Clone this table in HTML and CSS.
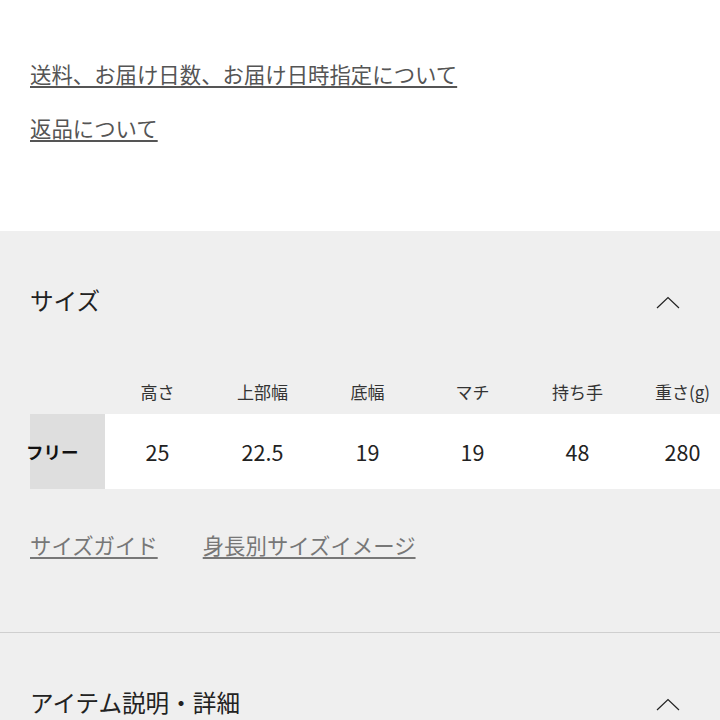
FILE: index.html
```html
<!DOCTYPE html>
<html lang="ja">
<head>
<meta charset="utf-8">
<link rel="stylesheet" href="styles.css">
</head>
<body>
<section class="top">
  <a class="link" href="#">送料、お届け日数、お届け日時指定について</a>
  <a class="link" href="#">返品について</a>
</section>
<section class="panel">
  <div class="acc-head">
    <h2 class="acc-title">サイズ</h2>
    <svg class="chev" width="24" height="13" viewBox="0 0 24 13"><path d="M1 12 L12 1.5 L23 12" fill="none" stroke="#222" stroke-width="1.2"/></svg>
  </div>
  <div class="table-wrap">
    <div class="size-table">
      <div class="th th-empty"></div>
      <div class="th">高さ</div>
      <div class="th">上部幅</div>
      <div class="th">底幅</div>
      <div class="th">マチ</div>
      <div class="th">持ち手</div>
      <div class="th">重さ(g)</div>
      <div class="td td-label"><span>フリー</span></div>
      <div class="td">25</div>
      <div class="td">22.5</div>
      <div class="td">19</div>
      <div class="td">19</div>
      <div class="td">48</div>
      <div class="td">280</div>
    </div>
  </div>
  <div class="guides">
    <a class="guide" href="#">サイズガイド</a>
    <a class="guide" href="#">身長別サイズイメージ</a>
  </div>
</section>
<section class="panel panel-second">
  <div class="acc-head acc-head-2">
    <h2 class="acc-title">アイテム説明・詳細</h2>
    <svg class="chev" width="24" height="13" viewBox="0 0 24 13"><path d="M1 12 L12 1.5 L23 12" fill="none" stroke="#222" stroke-width="1.2"/></svg>
  </div>
</section>
</body>
</html>
```

FILE: styles.css
```css
html, body {
  margin: 0;
  padding: 0;
  width: 720px;
  height: 720px;
  overflow: hidden;
  font-family: "Noto Sans CJK JP", "Noto Sans", sans-serif;
  color: #222;
}

.top {
  background: #fff;
  padding: 47px 30px 76px;
  height: 108px;
}

.link {
  display: block;
  width: max-content;
  font-size: 21.4px;
  line-height: 54px;
  color: #555;
  text-decoration: underline;
  text-decoration-color: #555;
  text-underline-offset: 3px;
  text-decoration-thickness: 2px;
}

.panel {
  background: #efefef;
}

.acc-head {
  display: flex;
  align-items: center;
  justify-content: space-between;
  height: 138px;
  padding: 0 40px 0 30px;
}

.acc-title {
  margin: 0;
  font-size: 23.6px;
  font-weight: 400;
  color: #222;
}

.chev {
  display: block;
  margin-top: 4px;
}

.table-wrap {
  margin-left: 30px;
}

.size-table {
  display: grid;
  grid-template-columns: 75px repeat(6, 105px);
  grid-template-rows: 45px 75px;
  width: 705px;
}

.th {
  display: flex;
  align-items: center;
  justify-content: center;
  font-size: 17px;
  color: #333;
}

.td {
  display: flex;
  align-items: center;
  justify-content: center;
  background: #fff;
  font-size: 21.5px;
  color: #222;
}

.td-label {
  background: #dedede;
  justify-content: flex-start;
  font-size: 17.5px;
  font-weight: 700;
  color: #111;
}

.td-label span {
  margin-left: -4px;
  white-space: nowrap;
}

.guides {
  display: flex;
  gap: 45px;
  padding: 36px 30px 0;
  height: 107px;
}

.guide {
  font-size: 21.4px;
  line-height: 40px;
  height: 40px;
  color: #777;
  text-decoration: underline;
  text-decoration-color: #777;
  text-underline-offset: 3px;
  text-decoration-thickness: 2px;
}

.panel-second {
  border-top: 1px solid #cfcfcf;
}

.acc-head-2 {
  height: 87px;
  align-items: flex-start;
  padding-top: 52px;
  box-sizing: border-box;
}

.acc-head-2 .chev {
  margin-top: 13px;
}
```
